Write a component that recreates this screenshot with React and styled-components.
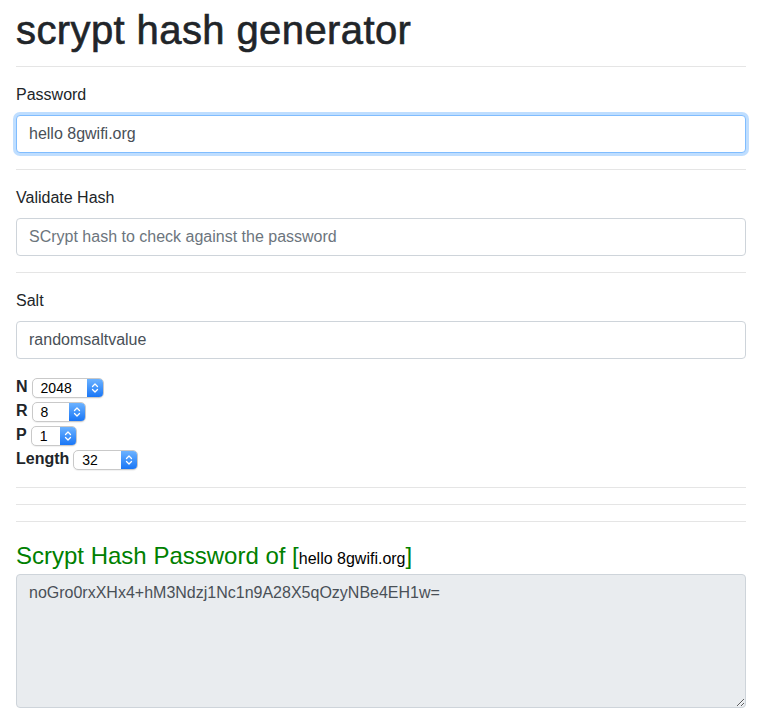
import React from "react";
import styled, { createGlobalStyle } from "styled-components";

const GlobalStyle = createGlobalStyle`
  body {
    margin: 0;
    background: #fff;
    font-family: "Liberation Sans", Arial, sans-serif;
    font-size: 16px;
    line-height: 1.5;
    color: #212529;
  }
  * { box-sizing: border-box; }
`;

const Page = styled.div`
  width: 730px;
  margin-left: 16px;
  padding-bottom: 40px;
`;

const Title = styled.h1`
  margin: 6px 0 0;
  font-size: 40px;
  font-weight: 500;
  line-height: 48px;
  letter-spacing: 0.4px;
  color: #212529;
  -webkit-text-stroke: 0.6px #212529;
`;

const Rule = styled.hr`
  border: 0;
  border-top: 1px solid rgba(0, 0, 0, 0.1);
  margin: ${(p) => (p.$first ? "12px 0 16px" : "16px 0")};
  height: 0;
`;

const Label = styled.label`
  display: block;
  margin-bottom: 8px;
  line-height: 24px;
`;

const Input = styled.input`
  display: block;
  width: 100%;
  height: 38px;
  padding: 6px 12px;
  font-family: inherit;
  font-size: 16px;
  line-height: 24px;
  color: #495057;
  background: #fff;
  border: 1px solid ${(p) => (p.$focused ? "#80bdff" : "#ced4da")};
  border-radius: 4px;
  outline: none;
  box-shadow: ${(p) => (p.$focused ? "0 0 0 3px rgba(0, 123, 255, 0.25)" : "none")};

  &::placeholder {
    color: #6c757d;
    opacity: 1;
  }
`;

const Params = styled.div`
  margin-top: 16px;
`;

const ParamRow = styled.div`
  display: flex;
  align-items: center;
  gap: 4px;
  height: 24px;
`;

const ParamName = styled.b`
  font-weight: 700;
  font-size: 16px;
`;

const Spinner = styled.div`
  display: inline-flex;
  align-items: stretch;
  width: ${(p) => p.$w}px;
  height: 20px;
  margin-top: 2px;
  border: 1px solid #c9c9c9;
  border-radius: 5px;
  background: #fff;
  box-shadow: 0 1px 1px rgba(0, 0, 0, 0.06);
  overflow: hidden;
`;

const SpinnerValue = styled.span`
  flex: 1;
  padding-left: 8px;
  font-size: 14px;
  line-height: 18px;
  color: #000;
`;

const SpinnerButton = styled.span`
  width: 16px;
  display: flex;
  align-items: center;
  justify-content: center;
  background: linear-gradient(#6bb2ff, #1976f6);
`;

const ResultTitle = styled.h4`
  margin: 22px 0 6px;
  font-size: 24px;
  font-weight: 500;
  line-height: 24px;
  color: green;
`;

const Quoted = styled.span`
  font-size: 16px;
  line-height: 1;
  color: #000;
`;

const Output = styled.textarea`
  display: block;
  width: 100%;
  height: 134px;
  padding: 6px 12px;
  font-family: inherit;
  font-size: 16px;
  line-height: 24px;
  color: #495057;
  background: #e9ecef;
  border: 1px solid #ced4da;
  border-radius: 4px;
  outline: none;
  resize: both;
`;

function Chevrons() {
  return (
    <svg width="8" height="12" viewBox="0 0 8 12">
      <path
        d="M1.5 4.5 L4 2 L6.5 4.5 M1.5 7.5 L4 10 L6.5 7.5"
        fill="none"
        stroke="#fff"
        strokeWidth="1.3"
        strokeLinecap="round"
        strokeLinejoin="round"
      />
    </svg>
  );
}

function Param({ name, value, width }) {
  return (
    <ParamRow>
      <ParamName>{name}</ParamName>
      <Spinner $w={width}>
        <SpinnerValue>{value}</SpinnerValue>
        <SpinnerButton>
          <Chevrons />
        </SpinnerButton>
      </Spinner>
    </ParamRow>
  );
}

export default function App() {
  return (
    <Page>
      <GlobalStyle />
      <Title>scrypt hash generator</Title>
      <Rule $first />
      <Label>Password</Label>
      <Input $focused defaultValue="hello 8gwifi.org" />
      <Rule />
      <Label>Validate Hash</Label>
      <Input placeholder="SCrypt hash to check against the password" />
      <Rule />
      <Label>Salt</Label>
      <Input defaultValue="randomsaltvalue" />
      <Params>
        <Param name="N" value="2048" width={72} />
        <Param name="R" value="8" width={54} />
        <Param name="P" value="1" width={46} />
        <Param name="Length" value="32" width={65} />
      </Params>
      <Rule />
      <Rule />
      <Rule />
      <ResultTitle>
        Scrypt Hash Password of [<Quoted>hello 8gwifi.org</Quoted>]
      </ResultTitle>
      <Output readOnly rows={5} defaultValue="noGro0rxXHx4+hM3Ndzj1Nc1n9A28X5qOzyNBe4EH1w=" />
    </Page>
  );
}
